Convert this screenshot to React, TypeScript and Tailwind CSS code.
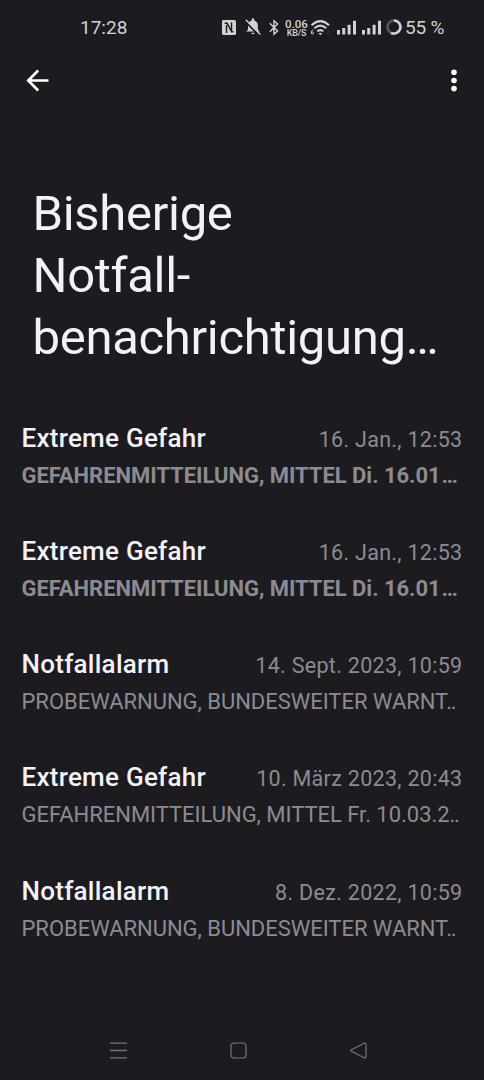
type Alert = { title: string; date: string; body: string; dots: string; dotsClass: string; unread?: boolean };

const alerts: Alert[] = [
  { title: 'Extreme Gefahr', date: '16. Jan., 12:53', body: 'GEFAHRENMITTEILUNG, MITTEL Di. 16.01', dots: '…', dotsClass: 'ml-[0.8px]', unread: true },
  { title: 'Extreme Gefahr', date: '16. Jan., 12:53', body: 'GEFAHRENMITTEILUNG, MITTEL Di. 16.01', dots: '…', dotsClass: 'ml-[0.8px]', unread: true },
  { title: 'Notfallalarm', date: '14. Sept. 2023, 10:59', body: 'PROBEWARNUNG, BUNDESWEITER WARNT', dots: '..', dotsClass: '-ml-[2px] tracking-[-1.3px]' },
  { title: 'Extreme Gefahr', date: '10. März 2023, 20:43', body: 'GEFAHRENMITTEILUNG, MITTEL Fr. 10.03.2', dots: '..', dotsClass: 'tracking-[-1.3px]' },
  { title: 'Notfallalarm', date: '8. Dez. 2022, 10:59', body: 'PROBEWARNUNG, BUNDESWEITER WARNT', dots: '..', dotsClass: '-ml-[2px] tracking-[-1.3px]' },
];

function Signal() {
  return (
    <svg width="20" height="16" viewBox="0 0 20 16" fill="#d2d2d5">
      <rect x="0" y="11" width="3" height="4.5" />
      <rect x="5.2" y="9" width="3" height="6.5" />
      <rect x="10.6" y="5.8" width="3" height="9.7" />
      <rect x="16" y="1.8" width="3" height="13.7" />
    </svg>
  );
}

function StatusBar() {
  return (
    <div className="flex h-[54px] items-center pl-[80px] text-[#d2d2d5]">
      <div className="w-[142px] pt-px text-[19px] leading-none">17:28</div>
      <svg width="14" height="15" viewBox="0 0 14 15" className="mr-[9px]">
        <rect width="14" height="15" rx="1.5" fill="#d2d2d5" />
        <path d="M2.6 3.3H5.2L9.5 11.5V2.2M4.5 5V13M9 11.8H11.4" fill="none" stroke="#1c1b20" strokeWidth="1.4" />
      </svg>
      <svg width="16" height="18" viewBox="0 0 16 18" className="mr-[8px]">
        <path d="M1.2 13.5L3 11.5V7.5C3 4.8 4.4 3 6.7 2.4V1.5a1.2 1.2 0 0 1 2.4 0v.9c2.3.6 3.8 2.4 3.8 5.1v4l1.8 2ZM6.4 14.7h3.2a1.6 1.6 0 0 1-3.2 0Z" fill="#d2d2d5" />
        <path d="M0.2 3.2L13.9 17.2" stroke="#1c1b20" strokeWidth="2" />
        <path d="M0.8 1.8L15.3 16.5" stroke="#d2d2d5" strokeWidth="1.4" />
      </svg>
      <svg width="10" height="17" viewBox="0 0 10 17" className="mr-[5px]" fill="none" stroke="#d2d2d5" strokeWidth="1.4">
        <path d="M0.8 4.3L8.6 12L5 15.2V1.8L8.6 5L0.8 12.7" />
      </svg>
      <div className="w-[25px] pt-[3px] text-center font-medium">
        <div className="text-[11.5px] leading-[10px]">0.06</div>
        <div className="text-[9px] leading-[9px] tracking-[-0.2px]">KB/S</div>
      </div>
      <svg width="21" height="18" viewBox="0 -1 21 18" className="ml-px" fill="none" stroke="#d2d2d5" strokeWidth="2.1">
        <path d="M1.6 6.2Q10.3 -1.8 19 6.2M4.4 9.3Q10.3 4 16.2 9.3M7.2 12.3Q10.3 9.8 13.4 12.3" />
        <path d="M8.3 14L10.3 16.3L12.3 14Z" fill="#d2d2d5" stroke="none" />
        <path d="M3.3 10.4Q1 11.8 1.3 14.2M1.3 14a1.1 1.1 0 1 0 2.2 0a1.1 1.1 0 1 0-2.2 0" strokeWidth="0.9" />
        <path d="M18 10v5M16.5 13.5l1.5 1.5l1.5-1.5" stroke="#333237" strokeWidth="1" />
      </svg>
      <div className="ml-[6px] flex w-[49px] gap-[5px]"><Signal /><Signal /></div>
      <svg width="16" height="16" viewBox="0 0 16 16" fill="none" strokeWidth="2.6">
        <circle cx="8" cy="8" r="6.5" stroke="#58575c" />
        <path d="M8 1.5A6.5 6.5 0 1 1 5 13.8" stroke="#d2d2d5" />
      </svg>
      <div className="ml-[3px] whitespace-nowrap pt-px text-[19px] leading-none tracking-[-0.15px]">55 %</div>
    </div>
  );
}

function AlertRow({ title, date, body, dots, dotsClass, unread }: Alert) {
  return (
    <li className="h-[113.25px] pl-[21.5px] pr-[21.5px]">
      <div className="flex h-[34px] items-baseline justify-between whitespace-nowrap">
        <h2 className="text-[26px] font-medium leading-[34px] tracking-[0.26px] text-[#f4f1f9]">{title}</h2>
        <time className="text-[21.5px] leading-[34px] tracking-[0.3px] text-[#8d8b92]">{date}</time>
      </div>
      <p className={`mt-[5px] whitespace-nowrap text-[22px] leading-[32px] tracking-[-0.03px] text-[#8d8b92] ${unread ? 'font-bold' : ''}`}>
        {body}<span className={dotsClass}>{dots}</span>
      </p>
    </li>
  );
}

export default function App() {
  return (
    <div className="flex h-[1080px] w-[484px] flex-col overflow-hidden bg-[#1c1b20] font-['Roboto',sans-serif]">
      <StatusBar />
      <header className="flex h-[52px] items-center justify-between pl-[26px] pr-[26px]">
        <svg width="24" height="24" viewBox="0 0 24 24" fill="none" stroke="#fff" strokeWidth="2.6">
          <path d="M22.5 12.5H3M12.2 2.5L2.2 12.5L12.2 22.5" />
        </svg>
        <svg width="8" height="24" viewBox="0 0 8 24" fill="#fff">
          <circle cx="4" cy="4.3" r="2.8" /><circle cx="4" cy="12.5" r="2.8" /><circle cx="4" cy="20.6" r="2.8" />
        </svg>
      </header>
      <h1 className="mt-[77px] pl-[32.5px] text-[49px] leading-[62px] tracking-[-0.3px] text-[#f4f1f9]">
        Bisherige<br />Notfall-<br />benachrichtigung…
      </h1>
      <ul className="mt-[51.7px] flex-1">
        {alerts.map((alert, i) => <AlertRow key={i} {...alert} />)}
      </ul>
      <nav className="flex h-[60px] items-center gap-[103px] pl-[110px] pt-px">
        <svg width="17" height="17" viewBox="0 0 17 17" stroke="#77767b" strokeWidth="1.3"><path d="M0 1.2H17M0 8.5H17M0 15.8H17" /></svg>
        <svg width="17" height="17" viewBox="0 0 17 17" fill="none" stroke="#77767b" strokeWidth="1.2"><rect x="1" y="1" width="15" height="15" rx="3" /></svg>
        <svg width="17" height="17" viewBox="0 0 17 17" fill="none" stroke="#77767b" strokeWidth="1.2" strokeLinejoin="round"><path d="M1.5 7.7L14.2 1.2Q16 .8 16 2.5V14.5Q16 16.2 14.2 15.8L1.5 9.3Q0 8.5 1.5 7.7Z" /></svg>
      </nav>
    </div>
  );
}
